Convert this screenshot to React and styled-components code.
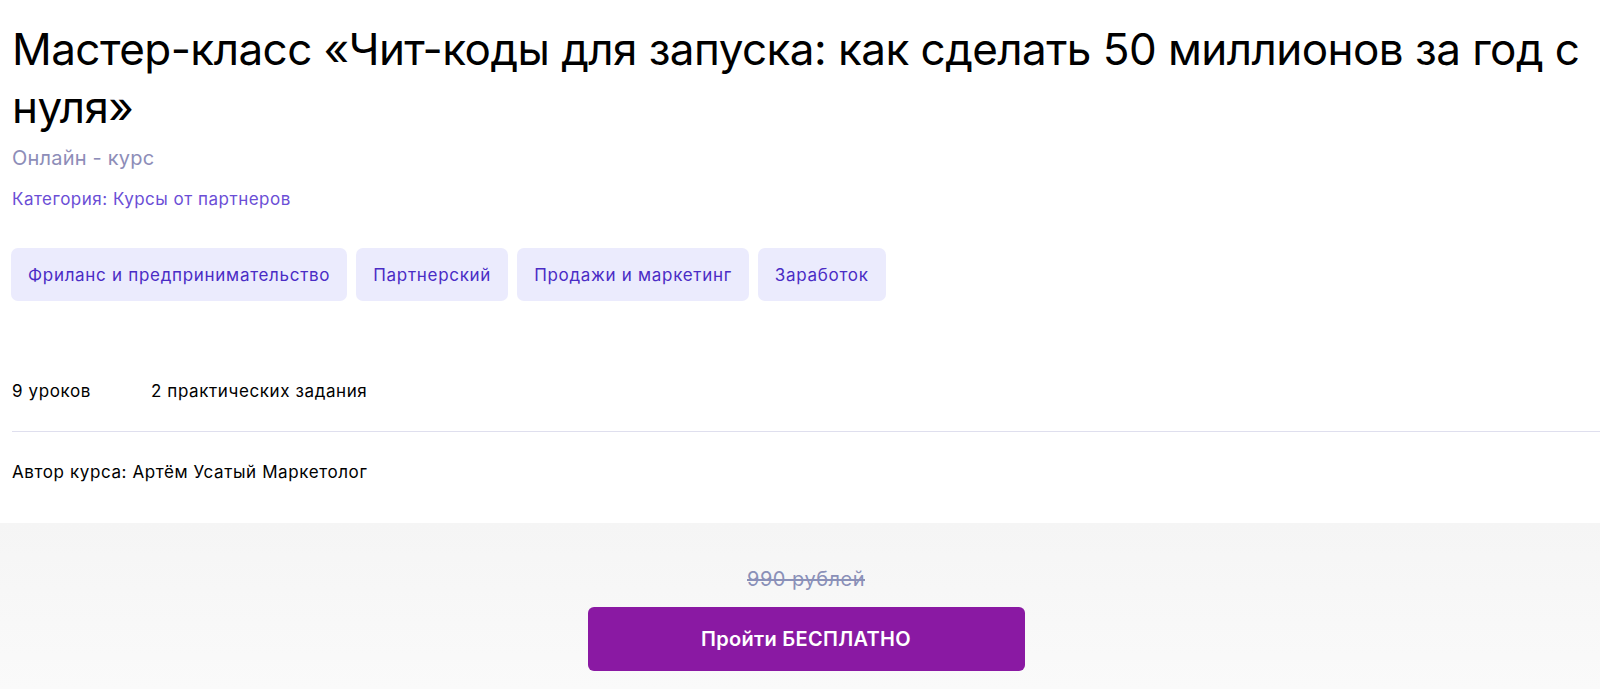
import React from "react";
import styled, { createGlobalStyle } from "styled-components";

const Global = createGlobalStyle`
  html, body { margin: 0; padding: 0; background: #fff; }
  body { font-family: Inter, "Noto Sans", sans-serif; color: #000; }
  * { box-sizing: border-box; }
`;

const Page = styled.div`
  display: flex;
  flex-direction: column;
  min-height: 689px;
`;

const Info = styled.section`
  padding: 20px 0 0 12px;
  display: flex;
  flex-direction: column;
`;

const Title = styled.h1`
  margin: 0;
  font-size: 44px;
  line-height: 58px;
  font-weight: 400;
  letter-spacing: -0.55px;
  color: #000;
`;

const Kind = styled.div`
  margin-top: 9px;
  font-size: 20px;
  line-height: 26px;
  letter-spacing: 0.2px;
  color: #8d8db8;
`;

const Category = styled.div`
  margin-top: 17px;
  font-size: 17px;
  line-height: 22px;
  letter-spacing: 0.5px;
  color: #6b4ed6;
`;

const Tags = styled.div`
  display: flex;
  gap: 9px;
  margin-top: 38px;
  margin-left: -1px;
`;

const Tag = styled.span`
  display: flex;
  align-items: center;
  height: 53px;
  padding: 0 17px;
  border-radius: 7px;
  background: #ebebfd;
  color: #4a2cc5;
  font-size: 17px;
  letter-spacing: 0.7px;
`;

const Stats = styled.div`
  display: flex;
  margin-top: 78px;
  font-size: 17px;
  line-height: 24px;
  letter-spacing: 0.6px;
`;

const Stat = styled.span`
  width: ${(p) => (p.$w ? `${p.$w}px` : "auto")};
`;

const Divider = styled.hr`
  margin: 28px 0 0;
  border: 0;
  border-top: 1px solid #dfdfee;
`;

const Author = styled.div`
  margin-top: 28px;
  font-size: 17px;
  line-height: 24px;
  letter-spacing: 0.6px;
`;

const Buy = styled.section`
  margin-top: 39px;
  flex: 1;
  background: linear-gradient(#f5f5f5, #fafafa);
  display: flex;
  flex-direction: column;
  align-items: center;
  padding: 43px 0 0 12px;
`;

const OldPrice = styled.div`
  font-size: 20px;
  line-height: 26px;
  letter-spacing: 0.5px;
  color: #8a90b8;
  text-decoration: line-through;
`;

const Button = styled.button`
  margin-top: 15px;
  width: 437px;
  height: 64px;
  border: 0;
  border-radius: 6px;
  background: #8a19a3;
  color: #fff;
  font-family: inherit;
  font-size: 20px;
  letter-spacing: 0.3px;
  font-weight: 600;
  cursor: pointer;
`;

export default function App() {
  const tags = [
    "Фриланс и предпринимательство",
    "Партнерский",
    "Продажи и маркетинг",
    "Заработок",
  ];
  return (
    <Page>
      <Global />
      <Info>
        <Title>
          Мастер-класс «Чит-коды для запуска: как сделать 50 миллионов за год с нуля»
        </Title>
        <Kind>Онлайн - курс</Kind>
        <Category>Категория: Курсы от партнеров</Category>
        <Tags>
          {tags.map((t) => (
            <Tag key={t}>{t}</Tag>
          ))}
        </Tags>
        <Stats>
          <Stat $w={139}>9 уроков</Stat>
          <Stat>2 практических задания</Stat>
        </Stats>
        <Divider />
        <Author>Автор курса: Артём Усатый Маркетолог</Author>
      </Info>
      <Buy>
        <OldPrice>990 рублей</OldPrice>
        <Button>Пройти БЕСПЛАТНО</Button>
      </Buy>
    </Page>
  );
}
